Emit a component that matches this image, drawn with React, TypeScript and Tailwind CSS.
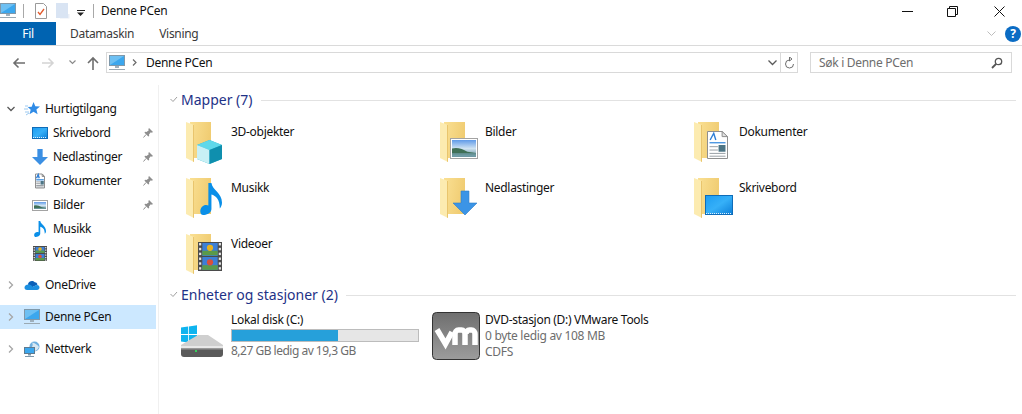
import React from 'react';

const Folder = ({ id }: { id: string }) => (
  <>
    <defs>
      <linearGradient id={id} x1="0" y1="0" x2="1" y2="0.300">
        <stop offset="0" stopColor="#fae093" />
        <stop offset="1" stopColor="#f0cc72" />
      </linearGradient>
    </defs>
    <path d="M6 2h21v36H6z" fill={`url(#${id})`} />
    <path d="M10 5 2 2v36l8 4z" fill="#fcebb0" />
    <path d="M10 5v37l-1-.500V5z" fill="#e9c56d" />
  </>
);

const Sky = ({ id }: { id: string }) => (
  <linearGradient id={id} x1="0" y1="0" x2="0" y2="1">
    <stop offset="0" stopColor="#5f9ae8" />
    <stop offset="0.5" stopColor="#cfe3f2" />
    <stop offset="1" stopColor="#5d8a96" />
  </linearGradient>
);

const PictureArt = ({ x, y, w, h, id }: { x: number; y: number; w: number; h: number; id: string }) => (
  <>
    <defs><Sky id={id} /></defs>
    <rect x={x + 0.5} y={y + 0.5} width={w - 1} height={h - 1} fill="#fff" stroke="#a3a3a3" />
    <rect x={x + 2} y={y + 2} width={w - 4} height={h - 4} fill={`url(#${id})`} />
    <path d={`M${x + 2} ${y + h * 0.5}Q${x + w * 0.35} ${y + h * 0.42} ${x + w * 0.62} ${y + h * 0.66}L${x + w - 2} ${y + h * 0.72}V${y + h * 0.8}H${x + 2}z`} fill="#3f6f56" />
    <path d={`M${x + 2} ${y + h * 0.72}H${x + w - 2}V${y + h - 2}H${x + 2}z`} fill="#6f9ba5" opacity="0.8" />
  </>
);

const DocArt = ({ x, y, w, h }: { x: number; y: number; w: number; h: number }) => {
  const rows = [0.42, 0.56, 0.68, 0.8, 0.9];
  return (
    <>
      <path d={`M${x + 0.5} ${y + 0.5}H${x + w * 0.72}L${x + w - 0.5} ${y + h * 0.2}V${y + h - 0.5}H${x + 0.5}z`} fill="#fff" stroke="#8f8f8f" />
      <path d={`M${x + w * 0.72} ${y + 0.5}V${y + h * 0.2}H${x + w - 0.5}z`} fill="#e4e4e4" stroke="#8f8f8f" />
      <path d={`M${x + w * 0.15} ${y + h * 0.32}L${x + w * 0.32} ${y + h * 0.08}L${x + w * 0.42} ${y + h * 0.32}`} fill="none" stroke="#2f7fd6" strokeWidth="1.4" />
      {rows.map((r, i) => (
        <path key={i} d={`M${x + w * 0.12} ${y + h * r}H${x + w * (i > 0 && i < 3 ? 0.52 : 0.88)}`} stroke={i === 0 ? '#2f86dd' : '#9aa0a6'} strokeWidth={i === 0 ? 1.2 : 1} />
      ))}
      <rect x={x + w * 0.55} y={y + h * 0.5} width={w * 0.33} height={h * 0.24} fill="#4d7585" />
    </>
  );
};

const FilmArt = ({ x, y, w, h }: { x: number; y: number; w: number; h: number }) => {
  const holes = [0, 1, 2, 3, 4, 5];
  const side = w * 0.18;
  return (
    <>
      <rect x={x} y={y} width={w} height={h} fill="#4b4b4b" />
      <rect x={x + side} y={y + 1} width={w - side * 2} height={h / 2 - 1.5} fill="#3d7fd6" />
      <rect x={x + side} y={y + h / 2 + 0.5} width={w - side * 2} height={h / 2 - 1.5} fill="#3d7fd6" />
      <rect x={x + side} y={y + h * 0.3} width={w - side * 2} height={h * 0.16} fill="#5a9a4a" />
      <rect x={x + side} y={y + h * 0.8} width={w - side * 2} height={h * 0.16} fill="#5a9a4a" />
      <circle cx={x + w / 2} cy={y + h * 0.2} r={w * 0.13} fill="#e8b21f" />
      <circle cx={x + w / 2} cy={y + h * 0.7} r={w * 0.13} fill="#d9503a" />
      {holes.map((i) => (
        <React.Fragment key={i}>
          <rect x={x + side * 0.25} y={y + 1 + (i * h) / 6} width={side * 0.5} height={h / 12} fill="#e6e6e6" />
          <rect x={x + w - side * 0.75} y={y + 1 + (i * h) / 6} width={side * 0.5} height={h / 12} fill="#e6e6e6" />
        </React.Fragment>
      ))}
    </>
  );
};

const DesktopArt = ({ x, y, w, h, id }: { x: number; y: number; w: number; h: number; id: string }) => (
  <>
    <defs>
      <linearGradient id={id} x1="0" y1="0" x2="1" y2="1">
        <stop offset="0" stopColor="#1c9cf2" />
        <stop offset="0.5" stopColor="#36b0f8" />
        <stop offset="1" stopColor="#0c7fd8" />
      </linearGradient>
    </defs>
    <rect x={x + 0.5} y={y + 0.5} width={w - 1} height={h - 1} fill={`url(#${id})`} stroke="#0f6cb8" />
    <path d={`M${x + 1} ${y + h - 1.5}H${x + w - 1}`} stroke="#dff1ff" strokeDasharray="1 1" />
  </>
);

const arrowPath = (x: number, y: number, w: number, h: number) => {
  const s = w * 0.33;
  const c = x + w / 2;
  const m = y + h * 0.5;
  return `M${c - s / 2} ${y}H${c + s / 2}V${m}H${x + w}L${c} ${y + h}L${x} ${m}H${c - s / 2}z`;
};

const notePath = (x: number, y: number, w: number, h: number) =>
  `M${x + w * 0.38} ${y}H${x + w * 0.52}C${x + w * 0.56} ${y + h * 0.22} ${x + w} ${y + h * 0.3} ${x + w} ${y + h * 0.62}C${x + w} ${y + h * 0.7} ${x + w * 0.95} ${y + h * 0.76} ${x + w * 0.9} ${y + h * 0.8}C${x + w * 0.9} ${y + h * 0.5} ${x + w * 0.72} ${y + h * 0.4} ${x + w * 0.52} ${y + h * 0.36}V${y + h * 0.82}C${x + w * 0.5} ${y + h * 0.95} ${x + w * 0.28} ${y + h} ${x + w * 0.14} ${y + h}C${x} ${y + h} ${x - w * 0.03} ${y + h * 0.84} ${x + w * 0.08} ${y + h * 0.75}C${x + w * 0.16} ${y + h * 0.68} ${x + w * 0.3} ${y + h * 0.67} ${x + w * 0.38} ${y + h * 0.7}z`;

const FolderIcon = ({ kind }: { kind: string }) => (
  <svg width="47" height="46" viewBox="0 0 47 46" className="shrink-0">
    <Folder id={`folder-${kind}`} />
    {kind === '3d' && (
      <>
        <path d="M25.500 20 38 25v14l-12.500 5L13 39V25z" fill="#2ab3cf" />
        <path d="M25.500 20 38 25l-12.500 5L13 25z" fill="#5fd8ea" />
        <path d="M13 25l12.500 5v14L13 39z" fill="#c9f0f5" />
        <path d="M25.500 30 38 25v14l-12.500 5z" fill="#0f8fae" />
      </>
    )}
    {kind === 'music' && <path d={notePath(16, 7, 22, 32)} fill="#0a8fe8" />}
    {kind === 'video' && <FilmArt x={14} y={10} w={24} h={29} />}
    {kind === 'picture' && <PictureArt x={12} y={18} w={28} h={21} id="picBig" />}
    {kind === 'download' && <path d={arrowPath(15, 15, 24, 24)} fill="#3b94e6" stroke="#2b7cc8" strokeWidth="0.6" />}
    {kind === 'doc' && <DocArt x={15} y={11} w={21} h={28} />}
    {kind === 'desktop' && <DesktopArt x={13} y={19} w={28} h={20} id="deskBig" />}
  </svg>
);

const SmallIcon = ({ kind }: { kind: string }) => (
  <svg width="16" height="16" viewBox="0 0 16 16" className="shrink-0">
    {kind === 'desktop' && <DesktopArt x={0} y={2} w={16} h={12} id="deskSmall" />}
    {kind === 'download' && <path d={arrowPath(0, 0, 16, 16)} fill="#3b8fe3" />}
    {kind === 'doc' && <DocArt x={3} y={0.5} w={10} h={15} />}
    {kind === 'picture' && <PictureArt x={0} y={3} w={16} h={11} id="picSmall" />}
    {kind === 'music' && <path d={notePath(2, 0, 12, 16)} fill="#0a8fe8" />}
    {kind === 'video' && <FilmArt x={1} y={1} w={14} h={15} />}
  </svg>
);

const Monitor = ({ tint = '#3ba7ee' }: { tint?: string }) => (
  <svg width="16" height="16" viewBox="0 0 16 16" className="shrink-0">
    <rect x="0.500" y="0.500" width="15" height="10" fill={tint} stroke="#7f98aa" />
    <path d="M1 1h14L1 10z" fill="#8fd1f7" opacity="0.6" />
    <path d="M6 11h4v2H6z" fill="#9eb0bd" />
    <path d="M0 14.500h16" stroke="#9aa9b3" />
  </svg>
);

const Star = () => (
  <svg width="16" height="16" viewBox="0 0 16 16" className="shrink-0">
    <path d="M9.500 1l1.800 4.200 4.700.4-3.600 3 1.200 4.700-4.100-2.600-4 2.500 1.200-4.500-3-2.700 4-.3z" fill="#2f8be6" />
    <path d="M1 5h3M0 8h4M1 11h4M2 14l3-2" stroke="#9cc9f0" />
  </svg>
);

const Cloud = () => (
  <svg width="16" height="16" viewBox="0 0 16 16" className="shrink-0">
    <path d="M4 7c.8-3 4.700-4 6.800-1.700C12 5.200 13 6 13.500 7.500L7 11 4.500 8.500z" fill="#0a5fb8" />
    <path d="M4.500 7.500C2 7.700.2 9 .5 11c.2 1.300 1.200 2 2.500 2h10c1.500 0 2.500-1 2.500-2.500S14.500 8 13 8c-2 0-3 1.500-4 2-1.500-1.500-2.500-2.700-4.500-2.500z" fill="#1c8fe0" />
  </svg>
);

const NetIcon = () => (
  <svg width="16" height="16" viewBox="0 0 16 16" className="shrink-0">
    <circle cx="10.500" cy="5.500" r="5" fill="#6fb0e0" />
    <path d="M8 1.500c1 2 1 3-.5 5 2 .5 3 1 3.500 3.500 2-1 3-2 4-4-1.500-2-3-3.500-7-4.500z" fill="#d7e7f2" />
    <rect x="0.500" y="6.500" width="10" height="6" fill="#3ba7ee" stroke="#5d7a90" />
    <path d="M4 13h3v1.500H4z" fill="#7f98aa" />
    <path d="M1 15.500h9" stroke="#7f98aa" />
  </svg>
);

const Chevron = ({ open }: { open?: boolean }) => (
  <svg width="8" height="8" viewBox="0 0 8 8" className="shrink-0">
    <path d={open ? 'M0.500 2 4 5.500 7.500 2' : 'M2 0.500 5.500 4 2 7.500'} fill="none" stroke={open ? '#595959' : '#a6a6a6'} strokeWidth="1.300" />
  </svg>
);

const Pin = () => (
  <svg width="10" height="10" viewBox="0 0 10 10" className="shrink-0">
    <path d="M6 0 10 4 8.800 4.700 7.800 4.200 6 6.500 6.200 8 5.300 8.500 1.500 4.700 2 3.800 3.500 4 5.800 2.200 5.300 1.200z" fill="#8e8e8e" />
    <path d="M3 6.500.5 9.500" stroke="#8e8e8e" />
  </svg>
);

const TopRow = ({ label, icon, active, open }: { label: string; icon: React.ReactNode; active?: boolean; open?: boolean }) => (
  <div className={`flex h-6 w-[156px] items-center ${active ? 'bg-[#cce8ff]' : ''}`}>
    <div className="ml-[7px] mr-[9px] flex w-2 justify-center"><Chevron open={open} /></div>
    {icon}
    <span className="ml-[5px] text-[#111]">{label}</span>
  </div>
);

const quick = [
  { label: 'Skrivebord', kind: 'desktop', pin: true },
  { label: 'Nedlastinger', kind: 'download', pin: true },
  { label: 'Dokumenter', kind: 'doc', pin: true },
  { label: 'Bilder', kind: 'picture', pin: true },
  { label: 'Musikk', kind: 'music', pin: false },
  { label: 'Videoer', kind: 'video', pin: false },
];

const folders = [
  { label: '3D-objekter', kind: '3d' },
  { label: 'Bilder', kind: 'picture' },
  { label: 'Dokumenter', kind: 'doc' },
  { label: 'Musikk', kind: 'music' },
  { label: 'Nedlastinger', kind: 'download' },
  { label: 'Skrivebord', kind: 'desktop' },
  { label: 'Videoer', kind: 'video' },
];

const SectionHead = ({ title }: { title: string }) => (
  <div className="flex h-5 items-center pr-[6px]">
    <svg width="8" height="8" viewBox="0 0 8 8" className="ml-[11px] mr-[3px] shrink-0">
      <path d="M0.500 3 3 5.500 7 1" fill="none" stroke="#a0a0a0" />
    </svg>
    <span className="text-[14px] tracking-normal text-[#1e3287]">{title}</span>
    <div className="ml-2 h-px flex-1 bg-[#e2e2e2]" />
  </div>
);

const DriveIcon = () => (
  <svg width="53" height="50" viewBox="0 0 53 50" className="shrink-0">
    <path d="M3 17.500l7-1v7.500H3zM10.800 16.400 19 15.200V24h-8.200zM3 25h7v7.500l-7-1zM10.800 25H19v8.800l-8.200-1.200z" fill="#0fb4ef" />
    <path d="M3 35 20 25h10l15 10v2H3z" fill="#cfcfcf" />
    <path d="M3 36h42v3H3z" fill="#e8e8e8" />
    <path d="M3 38h42v6c0 2-1 3-3 3H6c-2 0-3-1-3-3z" fill="#5a5a5a" />
    <path d="M3 38h42v1.500H3z" fill="#999" />
    <rect x="17" y="40" width="2" height="2" fill="#35d05a" />
  </svg>
);

const VmIcon = () => (
  <svg width="53" height="50" viewBox="0 0 53 50" className="shrink-0">
    <defs>
      <linearGradient id="vmBg" x1="0" y1="0" x2="0" y2="1">
        <stop offset="0" stopColor="#6f6f6f" />
        <stop offset="1" stopColor="#9c9c9c" />
      </linearGradient>
    </defs>
    <rect x="0.500" y="2.500" width="47" height="47" rx="4" fill="url(#vmBg)" stroke="#333" />
    <path d="M5 19.500 13.500 34 20 22" fill="none" stroke="#fff" strokeWidth="5.500" />
    <path d="M23 35V24c0-2 1.500-4 3.500-4h3c2 0 3.500 2 3.500 4v11M34 24c0-2 1.500-4 3.500-4h2c2 0 3.500 2 3.500 4v11" fill="none" stroke="#fff" strokeWidth="5.500" />
  </svg>
);

export default function App() {
  return (
    <div className="h-[414px] w-[1022px] overflow-hidden bg-white font-['Noto_Sans',sans-serif] text-[12px] leading-4 tracking-[-0.3px] text-black">
      {/* title bar */}
      <div className="flex h-[22px] items-center">
        <Monitor />
        <div className="ml-[7px] h-[14px] w-px bg-[#a8a8a8]" />
        <svg width="14" height="16" viewBox="0 0 14 16" className="ml-[10px]">
          <path d="M1.500.500h8l3 3v12h-11z" fill="#fff" stroke="#9a9a9a" />
          <path d="M4 9l2 2.500L10 6" fill="none" stroke="#e2592b" strokeWidth="1.300" />
        </svg>
        <svg width="14" height="16" viewBox="0 0 14 16" className="ml-[8px]">
          <path d="M0 0h12v15H0z" fill="#d9e4f3" />
          <path d="M12 11h1.500v4.500H4V15h8z" fill="#e9eef6" />
        </svg>
        <svg width="8" height="6" viewBox="0 0 8 6" className="ml-[7px] mt-[3px]">
          <path d="M0 0h8v1H0zM0 2.500h7L3.500 6z" fill="#222" />
        </svg>
        <div className="ml-[8px] h-[14px] w-px bg-[#a8a8a8]" />
        <span className="ml-[7px] text-[#111]">Denne PCen</span>
        <div className="ml-auto flex items-center">
          <svg width="11" height="1" className="mr-[34px]"><path d="M0 .500h11" stroke="#111" /></svg>
          <svg width="11" height="11" viewBox="0 0 11 11" className="mr-[36px]">
            <path d="M.500 2.500h8v8h-8zM2.500 2.500v-2h8v8h-2" fill="none" stroke="#111" />
          </svg>
          <svg width="11" height="11" viewBox="0 0 11 11" className="mr-[17px]">
            <path d="M.500.500l10 10M10.500.500l-10 10" stroke="#111" />
          </svg>
        </div>
      </div>

      {/* ribbon tabs */}
      <div className="flex h-6 items-stretch border-b border-[#dadada]">
        <div className="flex w-[56px] items-center justify-center bg-[#0063b1] text-white">Fil</div>
        <span className="ml-[14px] self-center text-[#3a3a3a]">Datamaskin</span>
        <span className="ml-[25px] self-center text-[#3a3a3a]">Visning</span>
        <div className="ml-auto flex items-center pr-[1px]">
          <svg width="9" height="6" viewBox="0 0 9 6" className="mr-[9px]">
            <path d="M.500.500l4 4 4-4" fill="none" stroke="#bdbdbd" />
          </svg>
          <div className="flex h-4 w-4 items-center justify-center rounded-full bg-[#0b6cc4] text-[12px] font-bold text-white">?</div>
        </div>
      </div>

      {/* address row */}
      <div className="flex h-[39px] items-start pt-[6px]">
        <div className="flex h-[21px] w-[106px] items-center">
          <svg width="14" height="12" viewBox="0 0 14 12" className="ml-3">
            <path d="M13 6H2M6.500 1.500 2 6l4.500 4.500" fill="none" stroke="#6e6e6e" strokeWidth="1.600" />
          </svg>
          <svg width="14" height="12" viewBox="0 0 14 12" className="ml-[15px]">
            <path d="M1 6h11M7.500 1.500 12 6l-4.500 4.500" fill="none" stroke="#d4d4d4" strokeWidth="1.600" />
          </svg>
          <svg width="7" height="5" viewBox="0 0 7 5" className="ml-[14px]">
            <path d="M.500.500 3.500 3.500 6.500.500" fill="none" stroke="#8a8a8a" strokeWidth="1.200" />
          </svg>
          <svg width="12" height="14" viewBox="0 0 12 14" className="ml-[11px]">
            <path d="M6 14V2M1 7l5-5 5 5" fill="none" stroke="#6e6e6e" strokeWidth="1.600" />
          </svg>
        </div>
        <div className="flex h-[21px] w-[692px] items-center border border-[#d9d9d9]">
          <div className="ml-[2px]"><Monitor /></div>
          <svg width="5" height="7" viewBox="0 0 5 7" className="ml-[7px]">
            <path d="M1 .500 4 3.500 1 6.500" fill="none" stroke="#6a6a6a" strokeWidth="1.200" />
          </svg>
          <span className="ml-[9px] text-[#111]">Denne PCen</span>
          <div className="ml-auto flex h-full items-center">
            <svg width="9" height="6" viewBox="0 0 9 6" className="mr-[3px]">
              <path d="M.500.500l4 4 4-4" fill="none" stroke="#5a5a5a" strokeWidth="1.300" />
            </svg>
            <div className="flex h-full w-[17px] items-center justify-center border-l border-[#d9d9d9]">
              <svg width="11" height="12" viewBox="0 0 11 12">
                <path d="M5.500 3a4 4 0 1 0 4 4M5.500 0v4l2.500-2z" fill="none" stroke="#6e6e6e" />
              </svg>
            </div>
          </div>
        </div>
        <div className="ml-[12px] flex h-[21px] w-[202px] items-center border border-[#d9d9d9] pl-2 pr-2">
          <span className="text-[#6d6d6d]">Søk i Denne PCen</span>
          <svg width="12" height="12" viewBox="0 0 12 12" className="ml-auto">
            <circle cx="7.500" cy="4.500" r="3.200" fill="none" stroke="#555" strokeWidth="1.300" />
            <path d="M5 7 1 11" stroke="#555" strokeWidth="1.800" />
          </svg>
        </div>
      </div>

      <div className="flex h-[329px]">
        {/* navigation tree */}
        <div className="w-[159px] shrink-0 border-r border-[#f0f0f0] pt-3">
          <TopRow label="Hurtigtilgang" icon={<Star />} open />
          {quick.map((q) => (
            <div key={q.label} className="flex h-6 w-[156px] items-center pl-[32px]">
              <SmallIcon kind={q.kind} />
              <span className="ml-[5px] text-[#111]">{q.label}</span>
              {q.pin && <div className="ml-auto mr-[3px]"><Pin /></div>}
            </div>
          ))}
          <div className="mt-2"><TopRow label="OneDrive" icon={<Cloud />} /></div>
          <div className="mt-2"><TopRow label="Denne PCen" icon={<Monitor />} active /></div>
          <div className="mt-2"><TopRow label="Nettverk" icon={<NetIcon />} /></div>
        </div>

        {/* content */}
        <div className="flex-1 pt-[5px]">
          <SectionHead title="Mapper (7)" />
          <div className="ml-[25px] mt-[10px] grid grid-cols-[254px_254px_254px] grid-rows-[56px_56px_53px]">
            {folders.map((f) => (
              <div key={f.label} className="flex items-start">
                <FolderIcon kind={f.kind} />
                <span className="pt-[4px] text-[#111]">{f.label}</span>
              </div>
            ))}
          </div>
          <SectionHead title="Enheter og stasjoner (2)" />
          <div className="ml-[19px] mt-[5px] flex">
            <div className="flex w-[254px] items-start">
              <DriveIcon />
              <div className="pt-[2px]">
                <div className="text-[#111]">Lokal disk (C:)</div>
                <div className="mt-[1px] h-[13px] w-[188px] border border-[#bcbcbc] bg-[#e6e6e6]">
                  <div className="h-full w-[106px] bg-[#26a0da]" />
                </div>
                <div className="mt-[1px] tracking-[-0.5px] text-[#6d6d6d]">8,27 GB ledig av 19,3 GB</div>
              </div>
            </div>
            <div className="flex items-start">
              <VmIcon />
              <div className="pt-[2px]">
                <div className="text-[#111]">DVD-stasjon (D:) VMware Tools</div>
                <div className="text-[#6d6d6d]">0 byte ledig av 108 MB</div>
                <div className="text-[#6d6d6d]">CDFS</div>
              </div>
            </div>
          </div>
        </div>
      </div>
    </div>
  );
}
